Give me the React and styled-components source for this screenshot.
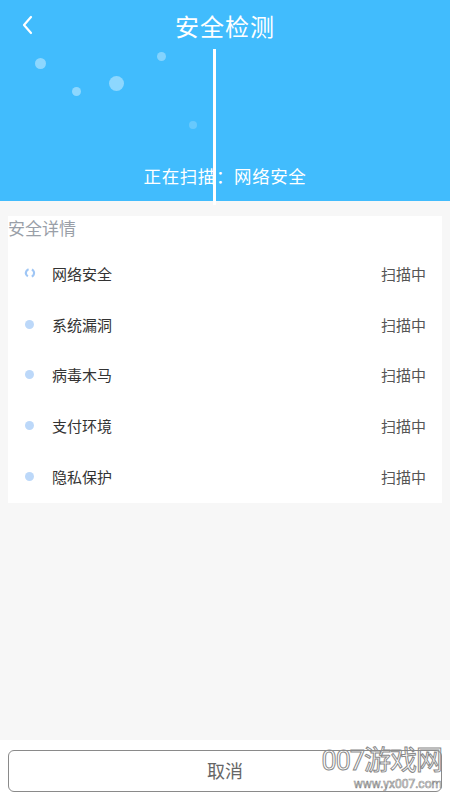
import React from "react";
import styled, { createGlobalStyle } from "styled-components";

const GlobalStyle = createGlobalStyle`
  html, body {
    margin: 0;
    padding: 0;
    background: #f7f7f7;
  }
  * {
    box-sizing: border-box;
  }
  body {
    font-family: Roboto, "Noto Sans CJK SC", sans-serif;
  }
`;

export const Page = styled.div`
  width: 450px;
  height: 800px;
  display: flex;
  flex-direction: column;
  background: #f7f7f7;
  position: relative;
  overflow: hidden;
`;

export const Header = styled.header`
  position: relative;
  height: 201px;
  background: #41bcfd;
  display: flex;
  flex-direction: column;
  align-items: center;
`;

export const TopBar = styled.div`
  width: 100%;
  height: 50px;
  display: flex;
  align-items: center;
  justify-content: center;
  position: relative;
`;

export const BackBtn = styled.button`
  position: absolute;
  left: 14px;
  top: 11px;
  width: 28px;
  height: 28px;
  padding: 0;
  border: none;
  background: transparent;
  display: flex;
  align-items: center;
  justify-content: center;
`;

export const Title = styled.h1`
  margin: 0;
  font-size: 24px;
  font-weight: 400;
  color: #ffffff;
  letter-spacing: 1px;
`;

export const Bubble = styled.span`
  position: absolute;
  border-radius: 50%;
  background: rgba(255, 255, 255, ${(p) => p.$a});
`;

export const ScanLine = styled.div`
  position: absolute;
  left: 213px;
  top: 49px;
  width: 3px;
  height: 156px;
  background: #ffffff;
  z-index: 2;
`;

export const Status = styled.div`
  margin-top: auto;
  margin-bottom: 13px;
  font-size: 17.5px;
  color: #ffffff;
  letter-spacing: 0.6px;
`;

export const Content = styled.main`
  flex: 1;
  padding: 15px 8px 0;
`;

export const Card = styled.section`
  background: #ffffff;
  padding-bottom: 1.5px;
`;

export const CardTitle = styled.div`
  height: 22px;
  display: flex;
  align-items: center;
  font-size: 17px;
  color: #9a9fa8;
`;

export const List = styled.div`
  padding-top: 10px;
`;

export const Row = styled.div`
  height: 50.7px;
  display: flex;
  align-items: center;
  padding: 0 16px 0 16px;
`;

export const Dot = styled.span`
  width: 9px;
  height: 9px;
  border-radius: 50%;
  background: #bcd8f9;
  margin: 0 0 0 1px;
`;

export const IconSlot = styled.div`
  width: 28px;
  display: flex;
  align-items: center;
`;

export const Label = styled.span`
  flex: 1;
  font-size: 15px;
  color: #333333;
`;

export const State = styled.span`
  font-size: 15px;
  color: #555555;
`;

export const Footer = styled.footer`
  height: 60px;
  background: #ffffff;
  padding: 10px 8px 8px;
`;

export const CancelBtn = styled.button`
  width: 100%;
  height: 42px;
  border: 1px solid #8a8a8a;
  border-radius: 6px;
  background: #ffffff;
  font-family: inherit;
  font-size: 18px;
  color: #666666;
  padding: 0 0 2px;
`;

export const Watermark = styled.div`
  position: absolute;
  right: 8px;
  bottom: 10px;
  display: flex;
  flex-direction: column;
  align-items: flex-end;
  pointer-events: none;
  color: transparent;
  -webkit-text-stroke: 1px #8a8a8a;
  line-height: 1;
`;

export const MarkBig = styled.span`
  font-size: 27px;
  font-weight: 400;
  letter-spacing: -1px;
`;

export const MarkSmall = styled.span`
  font-size: 12px;
  -webkit-text-stroke: 0.6px #8a8a8a;
  margin-top: 3px;
`;

const bubbles = [
  { x: 40, y: 63, r: 5.5, a: 0.4 },
  { x: 76, y: 91, r: 4.5, a: 0.4 },
  { x: 116, y: 83, r: 7.5, a: 0.4 },
  { x: 161, y: 56, r: 4.5, a: 0.35 },
  { x: 193, y: 125, r: 4, a: 0.2 },
];

const items = ["网络安全", "系统漏洞", "病毒木马", "支付环境", "隐私保护"];

function Spinner() {
  // two arcs, left and right, gaps top and bottom
  return (
    <svg width="12" height="12" viewBox="0 0 12 12">
      <circle
        cx="6"
        cy="6"
        r="4"
        fill="none"
        stroke="#9fc6f5"
        strokeWidth="2.2"
        strokeDasharray="8.6 3.97"
        transform="rotate(-61.6 6 6)"
      />
    </svg>
  );
}

export default function App() {
  return (
    <>
      <GlobalStyle />
      <Page>
        <Header>
          <TopBar>
            <BackBtn>
              <svg width="16" height="22" viewBox="0 0 16 22">
                <path d="M11 3 L4 11 L11 19" fill="none" stroke="#fff" strokeWidth="2.2" strokeLinecap="round" strokeLinejoin="round" />
              </svg>
            </BackBtn>
            <Title>安全检测</Title>
          </TopBar>
          {bubbles.map((b, i) => (
            <Bubble
              key={i}
              $a={b.a}
              style={{ left: b.x - b.r, top: b.y - b.r, width: b.r * 2, height: b.r * 2 }}
            />
          ))}
          <Status>正在扫描：网络安全</Status>
        </Header>
        <ScanLine />
        <Content>
          <Card>
            <CardTitle>安全详情</CardTitle>
            <List>
              {items.map((name, i) => (
                <Row key={name}>
                  <IconSlot>{i === 0 ? <Spinner /> : <Dot />}</IconSlot>
                  <Label>{name}</Label>
                  <State>扫描中</State>
                </Row>
              ))}
            </List>
          </Card>
        </Content>
        <Footer>
          <CancelBtn>取消</CancelBtn>
        </Footer>
        <Watermark>
          <MarkBig>007游戏网</MarkBig>
          <MarkSmall>www.yx007.com</MarkSmall>
        </Watermark>
      </Page>
    </>
  );
}
